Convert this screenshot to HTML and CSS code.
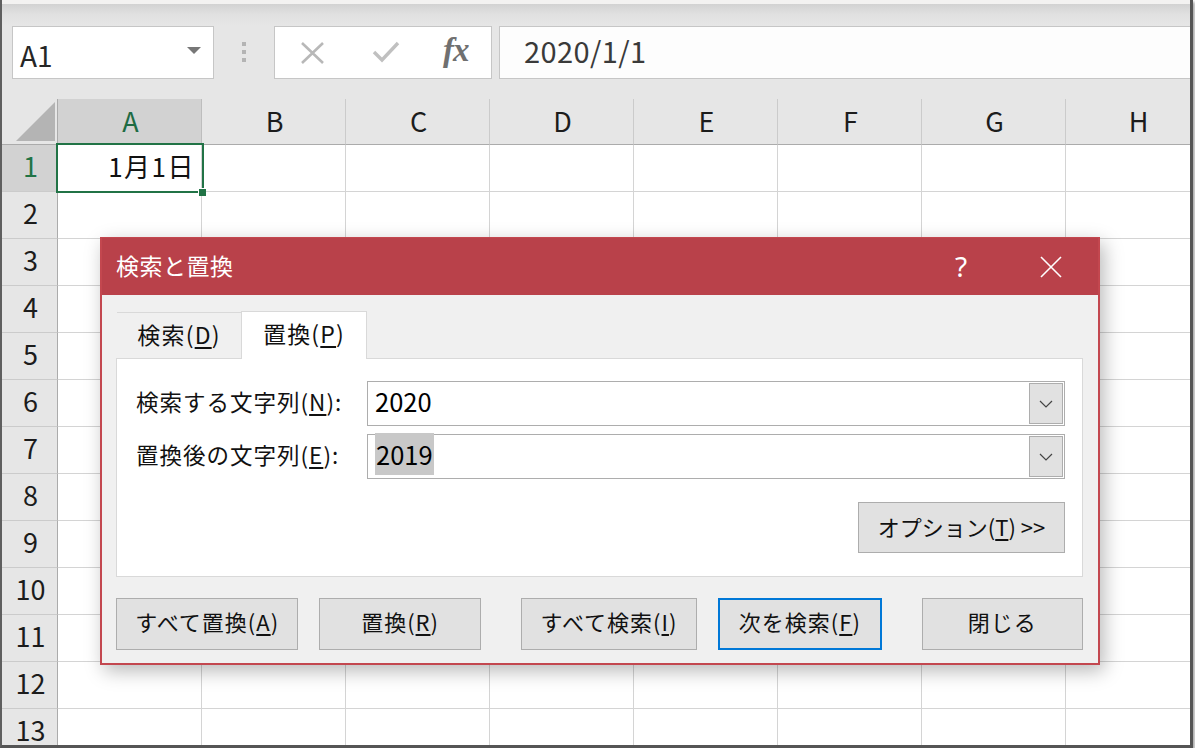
FILE: index.html
```html
<!DOCTYPE html>
<html lang="ja">
<head>
<meta charset="utf-8">
<title>Excel - 検索と置換</title>
<link rel="stylesheet" href="styles.css">
</head>
<body>
<div class="window">
  <div class="topstrip"></div>
  <div class="formula-area">
    <div class="namebox">
      <span class="namebox-text">A1</span>
      <span class="namebox-arrow"></span>
    </div>
    <div class="grip"><i></i><i></i><i></i></div>
    <div class="fbuttons">
      <svg class="ficon" width="26" height="22" viewBox="0 0 26 22"><path d="M2 1 L23 21 M23 1 L2 21" stroke="#b8b8b8" stroke-width="2.6" fill="none"/></svg>
      <svg class="ficon" width="28" height="24" viewBox="0 0 28 24"><path d="M2 12 L10 20 L26 3" stroke="#c0c0c0" stroke-width="3.4" fill="none"/></svg>
      <span class="fx">fx</span>
    </div>
    <div class="finput">2020/1/1</div>
  </div>

  <div class="sheet">
    <div class="grid">
      <div class="corner"><span class="corner-tri"></span></div>
      <div class="ch ch-sel">A</div><div class="ch">B</div><div class="ch">C</div><div class="ch">D</div><div class="ch">E</div><div class="ch">F</div><div class="ch">G</div><div class="ch">H</div>

      <div class="rh rh-sel">1</div><div class="c c-active"><span class="cell-val">1月1日</span><span class="sel-box"></span><span class="fill-handle"></span></div><div class="c"></div><div class="c"></div><div class="c"></div><div class="c"></div><div class="c"></div><div class="c"></div><div class="c"></div>
      <div class="rh">2</div><div class="c"></div><div class="c"></div><div class="c"></div><div class="c"></div><div class="c"></div><div class="c"></div><div class="c"></div><div class="c"></div>
      <div class="rh">3</div><div class="c"></div><div class="c"></div><div class="c"></div><div class="c"></div><div class="c"></div><div class="c"></div><div class="c"></div><div class="c"></div>
      <div class="rh">4</div><div class="c"></div><div class="c"></div><div class="c"></div><div class="c"></div><div class="c"></div><div class="c"></div><div class="c"></div><div class="c"></div>
      <div class="rh">5</div><div class="c"></div><div class="c"></div><div class="c"></div><div class="c"></div><div class="c"></div><div class="c"></div><div class="c"></div><div class="c"></div>
      <div class="rh">6</div><div class="c"></div><div class="c"></div><div class="c"></div><div class="c"></div><div class="c"></div><div class="c"></div><div class="c"></div><div class="c"></div>
      <div class="rh">7</div><div class="c"></div><div class="c"></div><div class="c"></div><div class="c"></div><div class="c"></div><div class="c"></div><div class="c"></div><div class="c"></div>
      <div class="rh">8</div><div class="c"></div><div class="c"></div><div class="c"></div><div class="c"></div><div class="c"></div><div class="c"></div><div class="c"></div><div class="c"></div>
      <div class="rh">9</div><div class="c"></div><div class="c"></div><div class="c"></div><div class="c"></div><div class="c"></div><div class="c"></div><div class="c"></div><div class="c"></div>
      <div class="rh">10</div><div class="c"></div><div class="c"></div><div class="c"></div><div class="c"></div><div class="c"></div><div class="c"></div><div class="c"></div><div class="c"></div>
      <div class="rh">11</div><div class="c"></div><div class="c"></div><div class="c"></div><div class="c"></div><div class="c"></div><div class="c"></div><div class="c"></div><div class="c"></div>
      <div class="rh">12</div><div class="c"></div><div class="c"></div><div class="c"></div><div class="c"></div><div class="c"></div><div class="c"></div><div class="c"></div><div class="c"></div>
      <div class="rh">13</div><div class="c"></div><div class="c"></div><div class="c"></div><div class="c"></div><div class="c"></div><div class="c"></div><div class="c"></div><div class="c"></div>
    </div>

    <div class="dialog">
      <div class="titlebar">
        <span class="title">検索と置換</span>
        <span class="help">?</span>
        <svg class="close" width="22" height="22" viewBox="0 0 22 22"><path d="M1 1 L21 21 M21 1 L1 21" stroke="#ffffff" stroke-width="1.6" fill="none"/></svg>
      </div>
      <div class="dbody">
        <div class="tabs">
          <div class="tab">検索(<u>D</u>)</div>
          <div class="tab tab-active">置換(<u>P</u>)</div>
        </div>
        <div class="panel">
          <div class="field">
            <label class="flabel">検索する文字列(<u>N</u>):</label>
            <div class="combo">
              <span class="combo-text">2020</span>
              <span class="combo-btn"><svg width="14" height="8" viewBox="0 0 14 8"><path d="M1 1 L7 7 L13 1" stroke="#444" stroke-width="1.2" fill="none"/></svg></span>
            </div>
          </div>
          <div class="field">
            <label class="flabel">置換後の文字列(<u>E</u>):</label>
            <div class="combo">
              <span class="combo-text"><span class="hl">2019</span></span>
              <span class="combo-btn"><svg width="14" height="8" viewBox="0 0 14 8"><path d="M1 1 L7 7 L13 1" stroke="#444" stroke-width="1.2" fill="none"/></svg></span>
            </div>
          </div>
          <div class="opt-row">
            <button class="btn btn-opt">オプション(<u>T</u>) &gt;&gt;</button>
          </div>
        </div>
        <div class="actions">
          <button class="btn b1">すべて置換(<u>A</u>)</button>
          <button class="btn b2">置換(<u>R</u>)</button>
          <button class="btn b3">すべて検索(<u>I</u>)</button>
          <button class="btn b4 btn-default">次を検索(<u>F</u>)</button>
          <button class="btn b5">閉じる</button>
        </div>
      </div>
    </div>
  </div>
</div>
</body>
</html>
```

FILE: styles.css
```css
* { box-sizing: border-box; }

html, body {
  margin: 0;
  padding: 0;
  background: #ffffff;
}

body {
  font-family: "Noto Sans CJK JP", "Noto Sans", sans-serif;
  color: #1a1a1a;
  overflow: hidden;
}

.window {
  width: 1193px;
  height: 748px;
  display: flex;
  flex-direction: column;
  border-left: 2px solid #5f5f5f;
  border-right: 3px solid #555555;
  border-bottom: 3px solid #555555;
  box-shadow: 2px 2px 3px rgba(0,0,0,0.35);
  overflow: hidden;
  background: #ffffff;
}

.topstrip {
  height: 4px;
  background: #f3f2f1;
  flex: none;
}

/* name box, formula buttons and input */
.formula-area {
  flex: none;
  height: 95px;
  display: flex;
  align-items: flex-start;
  padding: 22px 0 0 10px;
  background: linear-gradient(#d2d2d2 0px, #e0e0e0 10px, #e6e6e6 22px, #e6e6e6 100%);
}

.namebox {
  width: 202px;
  height: 53px;
  background: #ffffff;
  border: 1px solid #c6c6c6;
  display: flex;
  align-items: center;
  justify-content: space-between;
  padding: 2px 12px 0 7px;
}

.namebox-text {
  font-size: 28px;
  line-height: 1;
  color: #262626;
  padding-top: 3px;
}

.namebox-arrow {
  width: 0;
  height: 0;
  border-left: 7px solid transparent;
  border-right: 7px solid transparent;
  border-top: 7px solid #777777;
  margin-top: -6px;
}

.grip {
  width: 60px;
  height: 53px;
  display: flex;
  flex-direction: column;
  align-items: center;
  justify-content: center;
  gap: 4px;
  padding-bottom: 2px;
}

.grip i {
  display: block;
  width: 4px;
  height: 4px;
  background: #b4b4b4;
}

.fbuttons {
  width: 218px;
  height: 53px;
  background: #ffffff;
  border: 1px solid #c6c6c6;
  display: flex;
  align-items: center;
  padding: 0 0 0 25px;
}

.fbuttons .ficon:first-child { margin-right: 46px; }
.fbuttons .ficon:nth-child(2) { margin-right: 43px; margin-top: -2px; }

.fx {
  font-family: "Liberation Serif", "DejaVu Serif", serif;
  font-style: italic;
  font-weight: bold;
  font-size: 33px;
  line-height: 1;
  color: #707070;
  margin-top: -4px;
  letter-spacing: -1px;
}

.finput {
  flex: 1;
  margin-left: 7px;
  height: 53px;
  background: #fdfdfd;
  border: 1px solid #c6c6c6;
  border-right: none;
  font-size: 29px;
  line-height: 1;
  color: #3a3a3a;
  display: flex;
  align-items: center;
  padding: 0 0 4px 24px;
  letter-spacing: 0.4px;
}

/* worksheet */
.sheet {
  position: relative;
  flex: 1;
  background: #ffffff;
}

.grid {
  display: grid;
  grid-template-columns: 56px repeat(8, 144px);
  grid-template-rows: 46px repeat(13, 47px);
}

.corner {
  background: #e6e6e6;
  border-right: 1px solid #ababab;
  border-bottom: 1px solid #ababab;
  display: flex;
  align-items: flex-end;
  justify-content: flex-end;
  padding: 0 2px 3px 0;
}

.corner-tri {
  width: 0;
  height: 0;
  border-left: 39px solid transparent;
  border-bottom: 39px solid #b4b4b4;
}

.ch {
  background: #e6e6e6;
  border-right: 1px solid #cbcbcb;
  border-bottom: 1px solid #ababab;
  display: flex;
  align-items: center;
  justify-content: center;
  font-size: 27px;
  line-height: 1;
  color: #1c1c1c;
  padding: 0 0 3px 2px;
}

.ch-sel {
  background: #d2d2d2;
  color: #1e6b43;
  border-right-color: #bdbdbd;
}

.rh {
  background: #e6e6e6;
  border-right: 1px solid #ababab;
  border-bottom: 1px solid #cbcbcb;
  display: flex;
  align-items: center;
  justify-content: center;
  font-size: 27px;
  line-height: 1;
  color: #1c1c1c;
  padding: 0 0 5px 2px;
}

.rh-sel {
  background: #d2d2d2;
  color: #217346;
}

.c {
  border-right: 1px solid #d4d4d4;
  border-bottom: 1px solid #d4d4d4;
}

.c-active {
  position: relative;
  display: flex;
  align-items: center;
  justify-content: flex-end;
  padding: 0 6px 4px 0;
}

.cell-val {
  font-size: 26px;
  line-height: 1;
  color: #111111;
  letter-spacing: 1.5px;
}

.sel-box {
  position: absolute;
  left: -2px;
  top: -2px;
  right: -3px;
  bottom: -2px;
  border: 2px solid #217346;
}

.fill-handle {
  position: absolute;
  right: -5px;
  bottom: -5px;
  width: 8px;
  height: 8px;
  background: #217346;
  border: 1px solid #ffffff;
  border-right: none;
  border-bottom: none;
}

/* find & replace dialog */
.dialog {
  position: absolute;
  left: 98px;
  top: 138px;
  width: 1000px;
  height: 428px;
  background: #f0f0f0;
  border: 2px solid #c3474f;
  border-top: 1px solid #c3474f;
  box-shadow: 4px 6px 18px rgba(0, 0, 0, 0.28);
  display: flex;
  flex-direction: column;
}

.titlebar {
  flex: none;
  height: 57px;
  background: #b9414a;
  display: flex;
  align-items: center;
  padding: 0 0 0 14px;
  color: #ffffff;
}

.title {
  font-size: 23px;
  line-height: 1;
  flex: 1;
  padding-bottom: 2px;
  letter-spacing: 0.5px;
}

.help {
  font-size: 28px;
  line-height: 1;
  width: 20px;
  text-align: center;
  margin-right: 69px;
  font-family: "Noto Sans", sans-serif;
  font-weight: 400;
  padding-bottom: 2px;
}

.close {
  margin-right: 36px;
}

.dbody {
  flex: 1;
  display: flex;
  flex-direction: column;
  padding: 15px 15px 0 14px;
}

.tabs {
  display: flex;
  align-items: flex-end;
  height: 48px;
  padding-left: 1px;
  position: relative;
  z-index: 1;
}

.tab {
  height: 46px;
  width: 124px;
  border-top: 1px solid #d9d9d9;
  font-size: 23px;
  letter-spacing: 1.2px;
  line-height: 1;
  display: flex;
  align-items: center;
  justify-content: center;
  padding: 0 0 2px 0;
  color: #111111;
}

.tab-active {
  height: 48px;
  width: 126px;
  background: #ffffff;
  border: 1px solid #d9d9d9;
  border-bottom: none;
  padding: 0 0 4px 0;
  margin-bottom: -1px;
}

u {
  text-decoration-thickness: 2px;
  text-underline-offset: 3px;
}

.panel {
  flex: none;
  height: 219px;
  background: #ffffff;
  border: 1px solid #d9d9d9;
  padding: 22px 17px 0 19px;
  display: flex;
  flex-direction: column;
}

.field {
  display: flex;
  align-items: center;
  height: 45px;
  margin-bottom: 8px;
}

.flabel {
  width: 231px;
  font-size: 22.5px;
  letter-spacing: 1px;
  line-height: 1;
  color: #111111;
  padding-bottom: 5px;
}

.combo {
  flex: 1;
  height: 45px;
  border: 1px solid #adadad;
  background: #ffffff;
  display: flex;
  align-items: center;
  justify-content: space-between;
  padding: 0 1px 0 7px;
}

.combo-text {
  font-size: 25.5px;
  line-height: 1;
  color: #000000;
  padding-bottom: 5px;
}

.hl {
  background: #c8c8c8;
  padding: 2px 1px 3px 1px;
}

.combo-btn {
  width: 34px;
  height: 41px;
  background: #e1e1e1;
  border: 1px solid #adadad;
  display: flex;
  align-items: center;
  justify-content: center;
}

.opt-row {
  display: flex;
  justify-content: flex-end;
  margin-top: 15px;
}

.btn {
  font-family: "Noto Sans CJK JP", "Noto Sans", sans-serif;
  font-size: 22px;
  letter-spacing: 1px;
  line-height: 1;
  color: #111111;
  background: #e1e1e1;
  border: 1px solid #adadad;
  height: 52px;
  padding: 0 0 6px 0;
  margin: 0;
  display: flex;
  align-items: center;
  justify-content: center;
}

.btn-opt {
  width: 207px;
  height: 51px;
  letter-spacing: 0;
  padding-bottom: 3px;
}

.actions {
  display: flex;
  margin-top: 21px;
}

.b1 { width: 183px; }
.b2 { width: 162px; margin-left: 21px; }
.b3 { width: 177px; margin-left: 40px; }
.b4 { width: 164px; margin-left: 21px; }
.b5 { width: 162px; margin-left: 40px; }

.btn-default {
  border: 2px solid #0078d7;
}
```
